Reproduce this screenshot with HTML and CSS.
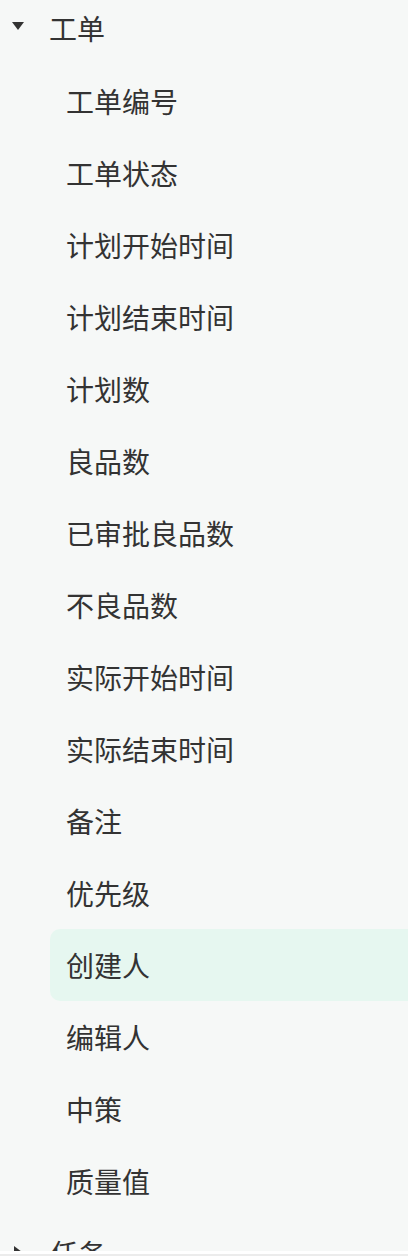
FILE: index.html
```html
<!DOCTYPE html>
<html lang="zh">
<head>
<meta charset="utf-8">
<link rel="stylesheet" href="styles.css">
</head>
<body>
<div class="tree">
  <div class="group">
    <div class="group-head">
      <span class="caret caret-down"></span>
      <span class="group-title">工单</span>
    </div>
    <ul class="items">
      <li class="item">工单编号</li>
      <li class="item">工单状态</li>
      <li class="item">计划开始时间</li>
      <li class="item">计划结束时间</li>
      <li class="item">计划数</li>
      <li class="item">良品数</li>
      <li class="item">已审批良品数</li>
      <li class="item">不良品数</li>
      <li class="item">实际开始时间</li>
      <li class="item">实际结束时间</li>
      <li class="item">备注</li>
      <li class="item">优先级</li>
      <li class="item active">创建人</li>
      <li class="item">编辑人</li>
      <li class="item">中策</li>
      <li class="item">质量值</li>
    </ul>
  </div>
  <div class="group group-next">
    <div class="group-head">
      <span class="caret caret-right"></span>
      <span class="group-title">任务</span>
    </div>
  </div>
</div>
<div class="bottom-bar"><div class="bottom-line"></div></div>
</body>
</html>
```
FILE: styles.css
```css
html, body {
  margin: 0;
  padding: 0;
  background: #f6f8f7;
  overflow: hidden;
}
body {
  width: 408px;
  height: 1260px;
  font-family: "Noto Sans CJK SC", "Noto Sans", sans-serif;
  color: #333333;
}
.tree {
  display: flex;
  flex-direction: column;
}
.group-head {
  height: 56px;
  display: flex;
  align-items: center;
  padding-left: 12px;
  font-size: 28px;
  line-height: 56px;
}
.caret {
  width: 13px;
  display: flex;
  justify-content: flex-start;
  margin-right: 25px;
}
.caret-down {
  width: 0;
  height: 0;
  border-left: 6.5px solid transparent;
  border-right: 6.5px solid transparent;
  border-top: 8px solid #333333;
  margin-top: -4px;
}
.caret-right {
  width: 0;
  height: 0;
  border-top: 6.5px solid transparent;
  border-bottom: 6.5px solid transparent;
  border-left: 8px solid #333333;
  margin-left: 2px;
  margin-right: 28px;
  margin-top: -2px;
}
.group-title {
  letter-spacing: 0;
}
.items {
  list-style: none;
  margin: 9px 0 0 0;
  padding: 0;
}
.item {
  height: 72px;
  line-height: 72px;
  margin-left: 50px;
  margin-right: -14px;
  padding-left: 16px;
  font-size: 28px;
  border-radius: 10px;
}
.item.active {
  background: #e6f7f0;
}
.group-next {
  margin-top: 8px;
}
.bottom-bar {
  position: fixed;
  left: 0;
  right: 0;
  bottom: 0;
  height: 9px;
  background: #ffffff;
  padding-top: 3px;
  box-sizing: border-box;
}
.bottom-line {
  height: 2px;
  background: #ececec;
}
```
